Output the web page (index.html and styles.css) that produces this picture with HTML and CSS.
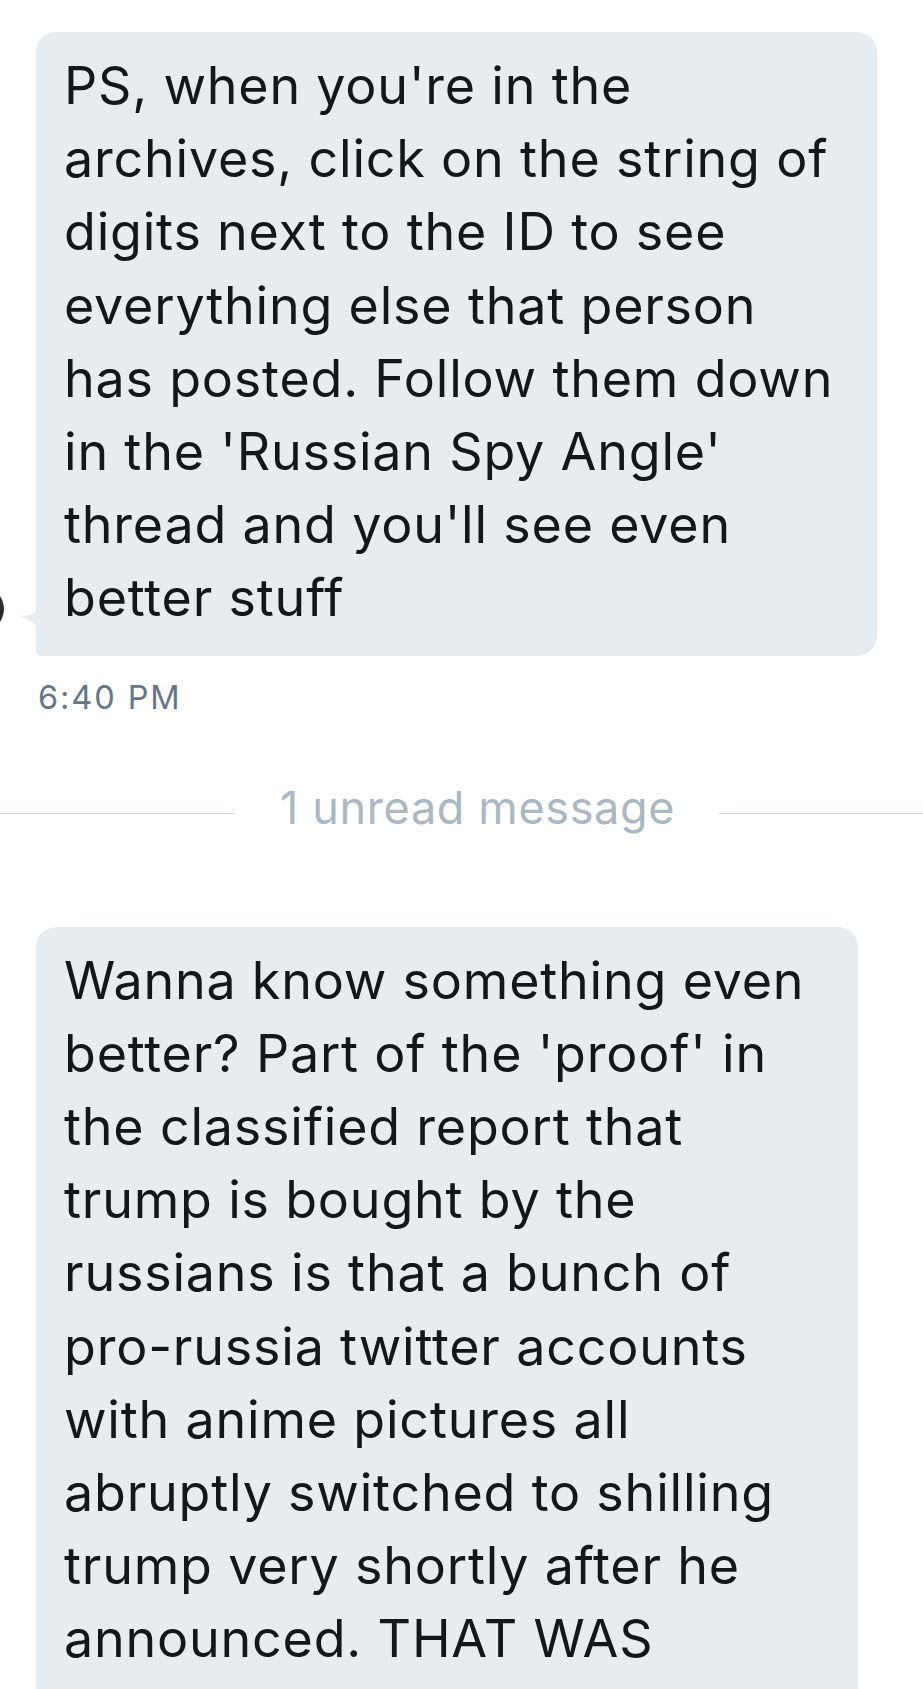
FILE: index.html
```html
<!DOCTYPE html>
<html>
<head>
<meta charset="utf-8">
<link rel="stylesheet" href="styles.css">
</head>
<body>
<div class="thread">
  <div class="msg-row">
    <div class="avatar"></div>
    <div class="bubble bubble-first">
      <svg class="tail" width="20" height="22" viewBox="0 0 20 22"><path d="M20 0 C18 8 10 10 0 10 C8 12 14 16 20 22 Z" fill="#e6ecf0"/></svg>
      <p class="text">PS, when you're in the<br>archives, click on the string of<br>digits next to the ID to see<br>everything else that person<br>has posted. Follow them down<br>in the 'Russian Spy Angle'<br>thread and you'll see even<br>better stuff</p>
    </div>
  </div>
  <div class="time">6:40 PM</div>
  <div class="divider">
    <span class="rule rule-left"></span>
    <span class="divider-text">1 unread message</span>
    <span class="rule rule-right"></span>
  </div>
  <div class="bubble bubble-second">
    <p class="text">Wanna know something even<br>better? Part of the 'proof' in<br>the classified report that<br>trump is bought by the<br>russians is that a bunch of<br>pro-russia twitter accounts<br>with anime pictures all<br>abruptly switched to shilling<br>trump very shortly after he<br>announced. THAT WAS</p>
  </div>
</div>
</body>
</html>
```
FILE: styles.css
```css
html, body {
  margin: 0;
  padding: 0;
  background: #ffffff;
}
body {
  width: 923px;
  height: 1689px;
  overflow: hidden;
  font-family: Inter, "Noto Sans", sans-serif;
}
.thread {
  padding-top: 32px;
}
.msg-row {
  position: relative;
}
.avatar {
  position: absolute;
  left: -40px;
  top: 555px;
  width: 44px;
  height: 44px;
  border-radius: 50%;
  background: #2b2b2b;
}
.bubble {
  position: relative;
  margin-left: 36px;
  box-sizing: border-box;
  background: #e6ecf0;
  border-radius: 20px;
  padding: 17px 0 21px 28px;
}
.bubble-first {
  width: 841px;
  border-bottom-left-radius: 5px;
}
.bubble-second {
  width: 822px;
  margin-top: 91px;
  padding-bottom: 80px;
}
.tail {
  position: absolute;
  left: -17px;
  bottom: 28px;
}
.text {
  margin: 0;
  font-size: 52px;
  line-height: 73.2px;
  color: #14171a;
  letter-spacing: 0.8px;
}
.time {
  margin: 22px 0 0 38px;
  font-size: 32.5px;
  line-height: 40px;
  color: #657786;
  letter-spacing: 1.9px;
}
.divider {
  display: flex;
  margin-top: 62px;
  height: 56px;
}
.rule {
  display: block;
  height: 1px;
  margin-top: 33px;
  background: #ccd6dd;
}
.rule-left {
  width: 234px;
}
.rule-right {
  flex: 1;
}
.divider-text {
  margin: 0 44px 0 46px;
  font-size: 45px;
  line-height: 56px;
  color: #aab8c2;
  letter-spacing: 0.65px;
}
```
